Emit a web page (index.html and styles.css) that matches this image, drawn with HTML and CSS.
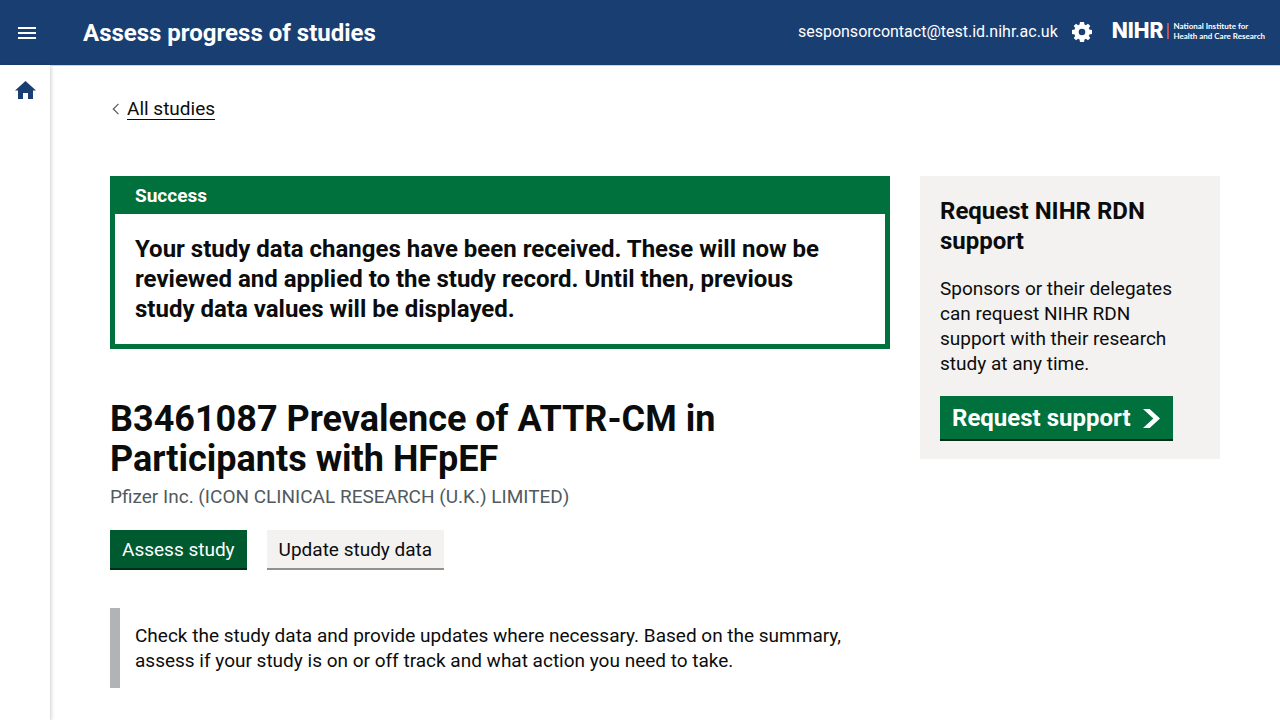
FILE: index.html
```html
<!DOCTYPE html>
<html lang="en">
<head>
<meta charset="utf-8">
<meta name="viewport" content="width=device-width, initial-scale=1">
<title>Assess progress of studies</title>
<link rel="stylesheet" href="styles.css">
</head>
<body>
<header class="header">
  <button class="menu-button" type="button" aria-label="Open menu">
    <svg width="18" height="12" viewBox="0 0 18 12" aria-hidden="true"><path fill="currentColor" d="M0 0h18v2H0zM0 5h18v2H0zM0 10h18v2H0z"/></svg>
  </button>
  <div class="header-title">Assess progress of studies</div>
  <div class="account">
    <span class="account-email">sesponsorcontact@test.id.nihr.ac.uk</span>
    <button class="settings-button" type="button" aria-label="Settings">
      <svg width="20" height="20" viewBox="0 0 20 20" aria-hidden="true"><path fill="currentColor" fill-rule="evenodd" d="M8 0h4l.5 2.6 1.4.6L16 1.7 18.3 4l-1.5 2.1.6 1.4 2.6.5v4l-2.6.5-.6 1.4 1.5 2.1-2.3 2.3-2.1-1.5-1.4.6L12 20H8l-.5-2.6-1.4-.6L4 18.3 1.7 16l1.500-2.100-.6-1.400L0 12V8l2.600-.5.6-1.400L1.700 4 4 1.700l2.100 1.500 1.400-.6zM10 6.700a3.300 3.300 0 1 0 0 6.600 3.300 3.300 0 0 0 0-6.600z"/></svg>
    </button>
    <a class="logo" href="#" aria-label="National Institute for Health and Care Research">
      <span class="logo-mark">NIHR</span>
      <span class="logo-name">National Institute for<br>Health and Care Research</span>
    </a>
  </div>
</header>
<div class="page">
  <nav class="sidebar" aria-label="Main">
    <a class="home-link" href="#" aria-label="Home">
      <svg width="21" height="18" viewBox="0 0 21 18" aria-hidden="true"><path fill="currentColor" d="M10.500 0 21 9.500h-3V18h-5v-6H8v6H3V9.500H0z"/></svg>
    </a>
  </nav>
  <div class="content">
    <a class="back-link" href="#">
      <svg width="8" height="12" viewBox="0 0 8 12" aria-hidden="true"><path fill="none" stroke="#505a5f" stroke-width="1.200" d="M6.500.8 1.300 6l5.200 5.200"/></svg>
      <span class="back-text">All studies</span>
    </a>
    <div class="columns">
      <main class="main">
        <section class="banner" aria-labelledby="banner-title">
          <h2 class="banner-title" id="banner-title">Success</h2>
          <p class="banner-text">Your study data changes have been received. These will now be reviewed and applied to the study record. Until then, previous study data values will be displayed.</p>
        </section>
        <h1 class="study-title">B3461087 Prevalence of ATTR-CM in Participants with HFpEF</h1>
        <p class="sponsor">Pfizer Inc. (ICON CLINICAL RESEARCH (U.K.) LIMITED)</p>
        <div class="actions">
          <a class="button button-primary" href="#">Assess study</a>
          <a class="button button-secondary" href="#">Update study data</a>
        </div>
        <p class="inset">Check the study data and provide updates where necessary. Based on the summary, assess if your study is on or off track and what action you need to take.</p>
      </main>
      <aside class="support">
        <h2 class="support-title">Request NIHR RDN support</h2>
        <p class="support-text">Sponsors or their delegates can request NIHR RDN support with their research study at any time.</p>
        <a class="start-button" href="#">Request support
          <svg width="17" height="19" viewBox="0 0 33 40" preserveAspectRatio="none" aria-hidden="true"><path fill="currentColor" d="M0 0h13l20 20-20 20H0l20-20z"/></svg>
        </a>
      </aside>
    </div>
  </div>
</div>
</body>
</html>
```
FILE: styles.css
```css
* {
  box-sizing: border-box;
}

body {
  margin: 0;
  min-height: 100vh;
  display: flex;
  flex-direction: column;
  background: #fff;
  color: #0b0c0c;
  font-family: Roboto, Arial, sans-serif;
  font-size: 19px;
  line-height: 25px;
}

h1, h2, p {
  margin: 0;
}

a {
  color: inherit;
  text-decoration: none;
}

button {
  border: 0;
  padding: 0;
  background: none;
  color: inherit;
  cursor: pointer;
}

svg {
  display: block;
  flex: none;
}

.header {
  display: flex;
  align-items: center;
  height: 65px;
  padding: 0 15px 0 18px;
  background: #193e72;
  color: #fff;
}

.header-title {
  margin-left: 47px;
  font-size: 24px;
  font-weight: 700;
  line-height: 30px;
}

.account {
  display: flex;
  align-items: center;
  margin-left: auto;
  padding-bottom: 2px;
}

.account-email {
  font-size: 16px;
  line-height: 20px;
}

.settings-button {
  margin: 0 20px 0 14px;
}

.logo {
  display: flex;
  align-items: center;
  padding-bottom: 2px;
  font-family: Lato, sans-serif;
}

.logo-mark {
  padding-right: 4px;
  border-right: 2px solid #b9535b;
  font-family: Inter, sans-serif;
  font-size: 21px;
  font-weight: 800;
  line-height: 16px;
}

.logo-name {
  margin-left: 4px;
  font-size: 8px;
  font-weight: 700;
  line-height: 10px;
}

.page {
  display: flex;
  flex: 1;
}

.sidebar {
  flex: none;
  width: 50px;
  padding: 16px 0 0 15px;
  box-shadow: 1px 1px 4px rgba(0, 0, 0, 0.2);
  color: #193e72;
}

.home-link {
  display: block;
}

.content {
  flex: 1;
  border-top: 1px solid #c9d3e1;
  padding: 30px 60px;
}

.back-link {
  display: inline-flex;
  align-items: center;
  gap: 7px;
  padding-left: 2px;
}

.back-text {
  border-bottom: 1px solid #0b0c0c;
  line-height: 20px;
}

.columns {
  display: grid;
  grid-template-columns: minmax(0, 1fr) 300px;
  gap: 30px;
  align-items: start;
  margin-top: 55px;
}

.banner {
  border: 5px solid #00703c;
}

.banner-title {
  padding: 2px 20px 6px;
  background: #00703c;
  color: #fff;
  font-size: 19px;
  line-height: 25px;
}

.banner-text {
  padding: 20px 40px 20px 20px;
  font-size: 24px;
  font-weight: 700;
  line-height: 30px;
}

.study-title {
  margin-top: 50px;
  font-size: 36px;
  line-height: 40px;
}

.sponsor {
  margin-top: 5px;
  color: #505a5f;
}

.actions {
  display: flex;
  gap: 20px;
  margin-top: 21px;
}

.button {
  padding: 7px 12px 6px;
  border-bottom: 2px solid #002d18;
}

.button-primary {
  background: #005a30;
  color: #fff;
}

.button-secondary {
  border-color: #929191;
  background: #f3f2f1;
}

.inset {
  margin-top: 38px;
  padding: 15px;
  border-left: 10px solid #b1b4b6;
}

.support {
  padding: 20px 20px 18px;
  background: #f3f2f1;
}

.support-title {
  font-size: 24px;
  line-height: 30px;
}

.support-text {
  margin: 20px 0;
}

.start-button {
  display: inline-flex;
  align-items: center;
  gap: 12px;
  padding: 7px 13px 6px 12px;
  border-bottom: 2px solid #002d18;
  background: #00703c;
  color: #fff;
  font-size: 24px;
  font-weight: 700;
  line-height: 30px;
  vertical-align: top;
}
```
